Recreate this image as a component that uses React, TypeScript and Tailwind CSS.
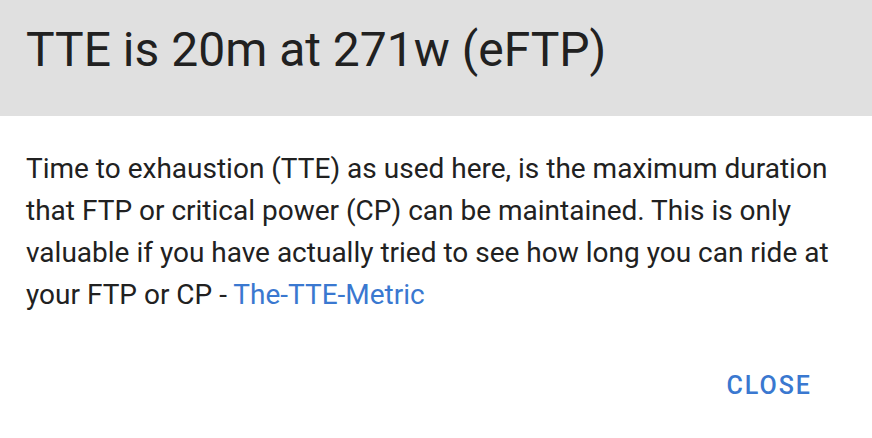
import React from "react";

export default function App() {
  return (
    <div className="w-[872px] h-[438px] bg-white flex flex-col" style={{ fontFamily: "Roboto, 'Liberation Sans', sans-serif" }}>
      <div className="h-[116px] bg-[#e0e0e0] flex items-start pt-[22px] px-[26px]">
        <h1 className="text-[48px] leading-[56px] text-[#212121] font-normal">TTE is 20m at 271w (eFTP)</h1>
      </div>
      <div className="pl-[26px] pr-[30px] pt-[32px] text-[28px] leading-[42px] text-[#212121]">
        Time to exhaustion (TTE) as used here, is the maximum duration that FTP or critical power (CP) can be maintained. This is only valuable if you have actually tried to see how long you can ride at your FTP or CP -{" "}
        <a className="text-[#3a78d0]">The-TTE-Metric</a>
      </div>
      <div className="flex justify-end px-[60px] mt-auto pb-[34px]">
        <button className="text-[25px] font-medium text-[#3a78d0] tracking-[2px]">CLOSE</button>
      </div>
    </div>
  );
}
